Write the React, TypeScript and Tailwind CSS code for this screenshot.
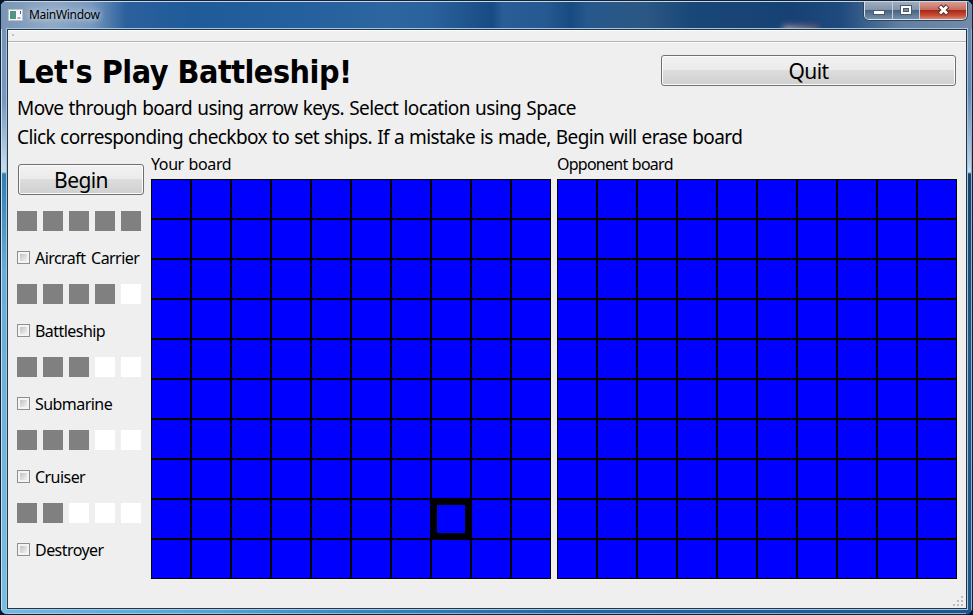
import { Fragment } from "react";

const ships = [
  { name: "Aircraft Carrier", size: 5 },
  { name: "Battleship", size: 4 },
  { name: "Submarine", size: 3 },
  { name: "Cruiser", size: 3 },
  { name: "Destroyer", size: 2 },
];

function Board({ selected }: { selected?: number }) {
  return (
    <div className="grid h-[400px] w-[400px] grid-cols-10 grid-rows-10">
      {Array.from({ length: 100 }, (_, i) => (
        <div
          key={i}
          className={
            i === selected
              ? "border-[6px] border-black bg-[#0000ff]"
              : "border border-black bg-[#0000ff]"
          }
        />
      ))}
    </div>
  );
}

const buttonLook =
  "flex h-[31px] items-center justify-center rounded-[3px] border border-[#707070] bg-[linear-gradient(#f2f2f2,#ebebeb_48%,#dddddd_50%,#cfcfcf)] pt-[2px] text-[21px] leading-none tracking-[-0.6px] shadow-[inset_0_0_0_1px_#fbfbfb]";

function TitleBar() {
  return (
    <div className="relative flex h-[28px] shrink-0 items-start justify-between overflow-hidden bg-[linear-gradient(90deg,#7995b5_0px,#90a9c5_50px,#7898bd_90px,#2b609d_125px,#205b99_190px,#245f9e_290px,#2d669f_390px,#2a629b_430px,#1c4f87_480px,#164b84_491px,#285d96_502px,#265991_545px,#174b80_570px,#27588c_586px,#2b5783_645px,#194778_690px,#174174_790px,#1e4a7d_840px,#617fa2_900px,#748ba8_973px)]">
      <div className="absolute left-[782px] top-[25px] h-[8px] w-[36px] bg-[linear-gradient(90deg,#b6a4aa,#7d536d)] blur-[3px]" />
      <div className="relative mt-[3px] flex h-[22px] items-center pl-[7px]">
        <svg width="16" height="12" className="-mt-px">
          <rect x="0.5" y="0.5" width="14" height="11" fill="#fafafa" stroke="#b9c3c8" />
          <rect x="2" y="2" width="6" height="8" fill="#529582" />
          <path d="M12.5 2v3M9.5 9h3" stroke="#657" />
        </svg>
        <span className="ml-[5px] text-[12px] tracking-[-0.3px] [text-shadow:0_0_8px_#cbd8e8,0_0_5px_#cbd8e8]">
          MainWindow
        </span>
      </div>
      <div className="relative mr-[5px] flex h-[19px] w-[103px] overflow-hidden rounded-b-[5px] border border-t-0 border-[#d8e0e8] shadow-[0_0_0_1px_#34435a]">
        <div className="w-[28px] border-r border-[#c3ceda] bg-[linear-gradient(#a2afc0,#8495ab_48%,#46617f_50%,#7390ab)]">
          <svg width="27" height="19">
            <rect x="8.5" y="9.5" width="11" height="4" fill="#fff" stroke="#4c5968" />
          </svg>
        </div>
        <div className="w-[27px] border-r border-[#c3ceda] bg-[linear-gradient(#a2afc0,#8495ab_48%,#46617f_50%,#7390ab)]">
          <svg width="26" height="19">
            <rect x="7.5" y="4.5" width="11" height="9" fill="#fff" stroke="#4c5968" />
            <rect x="10.5" y="7.5" width="5" height="3" fill="#778da4" stroke="#4c5968" />
          </svg>
        </div>
        <div className="flex-1 bg-[linear-gradient(#dba397,#c66c60_48%,#a42713_50%,#c84d37_80%,#d98670)]">
          <svg width="46" height="19">
            <path d="M19.5 5l8 8M27.5 5l-8 8" stroke="#56302f" strokeWidth="5" />
            <path d="M20 5.5l7 7M27 5.5l-7 7" stroke="#fff" strokeWidth="2.8" />
          </svg>
        </div>
      </div>
    </div>
  );
}

export default function App() {
  return (
    <div className="h-[615px] w-[973px] overflow-hidden bg-[#071426] font-['Noto_Sans',sans-serif] text-black">
      <div className="relative flex h-[615px] w-[973px] flex-col overflow-hidden rounded-[7px] border border-[#10233a] bg-[linear-gradient(90deg,#70b9e3_0px,#4ba4d3_220px,#3487bd_360px,#2168a5_560px,#1c568e_973px)]">
        <div className="absolute inset-0 rounded-[6px] border border-[#b9d4e8]/70" />
        <div className="absolute left-0 top-0 h-full w-[7px] border-l border-[#c6deee] bg-[linear-gradient(#7593b6_0px,#7898bd_100px,#c4d8ea_165px,#c4d8ea_171px,#2d7fb0_173px,#68add7_270px,#79bce3)]" />
        <div className="absolute right-0 top-0 h-full w-[6px] border-r border-[#8db1d1] bg-[linear-gradient(#748ba8_0px,#6687b0_90px,#bed1e3_165px,#d0dfed_171px,#15446d_173px,#215987_340px,#1c568e)]" />
        <TitleBar />
        <div className="absolute inset-x-[3px] top-0 h-px bg-[#c8d7e5]" />
        <main className="relative ml-[6px] flex h-[580px] w-[960px] flex-col border border-[#20364e] bg-[#efefef] shadow-[0_0_0_1px_#a7c5db]">
          <div className="h-[12px] shrink-0 border-b border-[#b5b5b5] bg-[#f0f0f0] pl-[4px] pt-[4px] shadow-[inset_0_1px_#fff,0_1px_#fafafa]">
            <div className="h-[2px] w-[2px] bg-[#b8c4ce]" />
          </div>
          <div className="flex h-[53px] items-start justify-between pl-[9px] pr-[10px] pt-[12px]">
            <h1 className="whitespace-nowrap font-['DejaVu_Sans_Condensed','DejaVu_Sans',sans-serif] text-[32px] font-bold leading-[36px] tracking-[-0.48px] [font-stretch:condensed]">
              Let's Play Battleship!
            </h1>
            <button className={`${buttonLook} mt-px w-[295px]`}>Quit</button>
          </div>
          <p className="h-[29px] whitespace-nowrap pl-[9px] text-[19px] leading-[27px] tracking-[-0.6px] [word-spacing:0.8px]">
            Move through board using arrow keys. Select location using Space
          </p>
          <p className="h-[29px] whitespace-nowrap pl-[9px] text-[19px] leading-[27px] tracking-[-0.6px] [word-spacing:0.7px]">
            Click corresponding checkbox to set ships. If a mistake is made, Begin will erase board
          </p>
          <div className="flex pl-[9px]">
            <aside className="w-[134px] pt-[11px]">
              <button className={`${buttonLook} ml-px w-[126px]`}>Begin</button>
              <div className="mt-[16px]">
                {ships.map((ship) => (
                  <Fragment key={ship.name}>
                    <div className="flex gap-[6px]">
                      {Array.from({ length: 5 }, (_, i) => (
                        <div
                          key={i}
                          className={i < ship.size ? "h-5 w-5 bg-[#808080]" : "h-5 w-5 bg-white"}
                        />
                      ))}
                    </div>
                    <div className="flex h-[53px] items-center whitespace-nowrap">
                      <div className="h-[13px] w-[13px] shrink-0 border border-[#8e8f8f] bg-[#f4f4f4] p-[2px]">
                        <div className="h-[7px] w-[7px] bg-[linear-gradient(135deg,#bfc3c7,#f1f1f1)]" />
                      </div>
                      <span className="ml-[5px] text-[16px] leading-none tracking-[-0.55px] [word-spacing:2px]">
                        {ship.name}
                      </span>
                    </div>
                  </Fragment>
                ))}
              </div>
            </aside>
            <section className="w-[406px]">
              <div className="h-[26px] text-[16px] leading-[23px] tracking-[-0.4px] [word-spacing:1px]">Your board</div>
              <Board selected={87} />
            </section>
            <section>
              <div className="h-[26px] text-[16px] leading-[23px] tracking-[-0.75px] [word-spacing:1px]">Opponent board</div>
              <Board />
            </section>
          </div>
          <svg className="absolute bottom-[1px] right-[2px]" width="11" height="11">
            {[[8, 0], [8, 4], [8, 8], [4, 4], [4, 8], [0, 8]].map(([x, y]) => (
              <rect key={`${x}-${y}`} x={x} y={y} width="2" height="2" fill="#bcbcbc" />
            ))}
          </svg>
        </main>
      </div>
    </div>
  );
}
